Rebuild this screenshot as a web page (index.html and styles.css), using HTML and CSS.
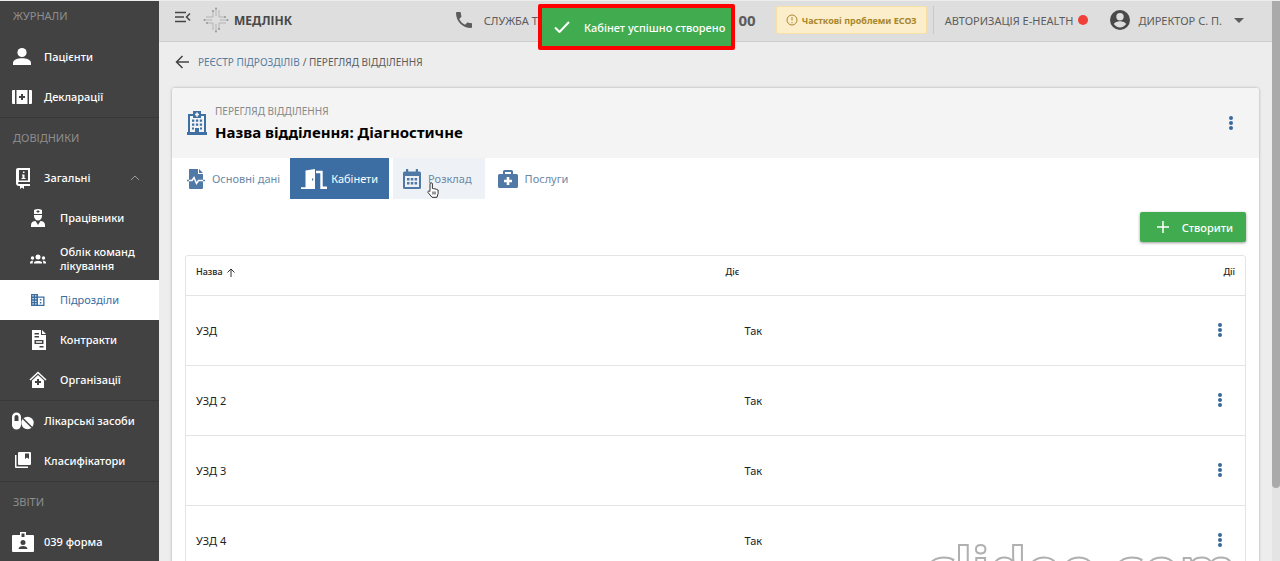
FILE: index.html
```
<!DOCTYPE html>
<html lang="uk">
<head>
    <meta charset="UTF-8">
    <meta name="viewport" content="width=device-width, initial-scale=1.0">
    <title>Медлінк - Перегляд відділення</title>
    <link rel="stylesheet" href="styles.css">
</head>
<body>
    <aside class="sidebar">
        <h2 class="nav-title first">ЖУРНАЛИ</h2>
        <nav class="nav-group">
            <a href="#" class="nav-item">
                <svg class="icon" viewBox="0 0 22 22"><circle cx="10" cy="6.500" r="4.600"/><path d="M1 19v-2c0-3.500 5-4.800 9-4.800s9 1.300 9 4.800v2z"/></svg>
                Пацієнти
            </a>
            <a href="#" class="nav-item">
                <svg class="icon" viewBox="0 0 22 22"><path d="M0 5a1 1 0 0 1 1-1h2v14H1a1 1 0 0 1-1-1zM4.500 4h11v14h-11zM17 4h2a1 1 0 0 1 1 1v12a1 1 0 0 1-1 1h-2z"/><path d="M10 8v6M7 11h6" stroke="#424242" stroke-width="2"/></svg>
                Декларації
            </a>
        </nav>

        <h2 class="nav-title">ДОВІДНИКИ</h2>
        <nav class="nav-group">
            <a href="#" class="nav-item">
                <svg class="icon" viewBox="0 0 22 22"><path fill-rule="evenodd" d="M6 1h12v14H7a1 1 0 0 0 0 2h11v2h-6v3l-2-1.500L8 22v-3H7a3 3 0 0 1-3-3V3a2 2 0 0 1 2-2zm1 2v10.500h9V3z"/><path d="M11 4.500h1.500v1.500H11zM10 7.500h2.500v3.500h1v1h-4v-1h1V8.500H10z"/></svg>
                Загальні
                <svg class="chevron" viewBox="0 0 10 6"><path d="M1 5l4-4 4 4"/></svg>
            </a>
            <a href="#" class="nav-item sub">
                <svg class="icon" viewBox="0 0 20 20"><path d="M6 2q4-2 8 0v4H6z"/><path d="M6 7h8v1c0 2.500-2 4.500-4 4.500S6 10.500 6 8z"/><path d="M3 19v-2c0-2.500 2-4 4.500-4L10 17l2.500-4c2.500 0 4.500 1.500 4.500 4v2z"/><path d="M10 2v3M8.500 3.500h3" stroke="#424242"/></svg>
                Працівники
            </a>
            <a href="#" class="nav-item sub two-lines">
                <svg class="icon" viewBox="0 0 20 20"><circle cx="10" cy="8" r="2.500"/><circle cx="4.500" cy="9" r="1.700"/><circle cx="15.500" cy="9" r="1.700"/><path d="M6 14.500v-1c0-2 8-2 8 0v1zM2 14.500v-1.200c0-1 1.500-1.600 3.200-1.600-.3.500-.5 1-.5 2.800zM18 14.500v-1.200c0-1-1.500-1.600-3.200-1.600.3.500.5 1 .5 2.800z"/></svg>
                Облік команд лікування
            </a>
            <a href="#" class="nav-item sub active">
                <svg class="icon" viewBox="0 0 20 20"><path fill-rule="evenodd" d="M3 4h7v2.500h6.500V16H3zm1.400 1.300v1.200h1.200V5.300zm2.800 0v1.200h1.200V5.300zM4.400 8v1.200h1.200V8zm2.800 0v1.200h1.200V8zm-2.800 2.700v1.200h1.200v-1.200zm2.800 0v1.200h1.200v-1.200zm-2.800 2.600v1.200h1.200v-1.200zm2.800 0v1.200h1.200v-1.200zM10 7.800v7h5.200v-7zM11.800 9h1.600v1.500h-1.600zm0 3h1.600v1.500h-1.600z"/></svg>
                Підрозділи
            </a>
            <a href="#" class="nav-item sub">
                <svg class="icon" viewBox="0 0 20 20"><path fill-rule="evenodd" d="M4 0h9v5h5v15H4zm2.500 3v1.500H11V3zm0 3v1.500H11V6zm0 4v4h9v-4zm1.500 1.300h6v1.400H8zM11.500 16v1.500h4V16zM14 0l4 4h-4z"/></svg>
                Контракти
            </a>
            <a href="#" class="nav-item sub">
                <svg class="icon" viewBox="0 0 20 20"><path d="M2 10l8-7.500 8 7.500" fill="none" stroke="#fff" stroke-width="1.500"/><path d="M4 10.500L10 5l6 5.500V18H4z"/><path d="M10 9v6M7 12h6" stroke="#424242" stroke-width="2"/></svg>
                Організації
            </a>
        </nav>
        <nav class="nav-group">
            <a href="#" class="nav-item">
                <svg class="icon" viewBox="0 0 22 22"><path fill-rule="evenodd" d="M0 7a4.500 4.500 0 0 1 9 0v8a4.500 4.500 0 0 1-9 0zm2.500 0v4h4V7a2 2 0 0 0-4 0z"/><circle cx="15.500" cy="13" r="6.200"/><path d="M11 8.500l9 9" stroke="#424242" stroke-width="1.500"/></svg>
                Лікарські засоби
            </a>
            <a href="#" class="nav-item">
                <svg class="icon" viewBox="0 0 22 22"><path fill-rule="evenodd" d="M7 2h11a1 1 0 0 1 1 1v11a1 1 0 0 1-1 1H7a1 1 0 0 1-1-1V3a1 1 0 0 1 1-1zm6 1.500V9l2-1.500L17 9V3.500z"/><path d="M3 5h1.500v11.500H16V18H4a1 1 0 0 1-1-1z"/></svg>
                Класифікатори
            </a>
        </nav>

        <h2 class="nav-title">ЗВІТИ</h2>
        <nav class="nav-group">
            <a href="#" class="nav-item">
                <svg class="icon" viewBox="0 0 22 22"><path fill-rule="evenodd" d="M1 4h7V1h6v3h7a1 1 0 0 1 1 1v15a1 1 0 0 1-1 1H1a1 1 0 0 1-1-1V5a1 1 0 0 1 1-1zm8.500-1.500V6h3V2.500z"/><circle cx="11" cy="11.500" r="2.500" fill="#424242"/><path d="M6.500 18c0-4 9-4 9 0z" fill="#424242"/></svg>
                039 форма
            </a>
        </nav>
    </aside>

    <div class="page">
        <header class="topbar">
            <button class="icon-btn menu-btn" aria-label="Меню">
                <svg viewBox="0 0 16 12"><path d="M0 1.500h11M0 6h9M0 10.500h11M15 2.500L11.500 6l3.500 3.500"/></svg>
            </button>
            <a href="#" class="logo">
                <svg viewBox="0 0 26 26"><path d="M10 3v7H3M16 3v7h7M10 23v-7H3M16 23v-7h7M13 1v8M13 17v8M1 13h8M17 13h8" /><g class="dots"><circle cx="13" cy="1.500" r="1"/><circle cx="13" cy="24.500" r="1"/><circle cx="1.500" cy="13" r="1"/><circle cx="24.500" cy="13" r="1"/><circle cx="10" cy="4" r="1"/><circle cx="16" cy="22" r="1"/><circle cx="4" cy="16" r="1"/><circle cx="22" cy="10" r="1"/></g></svg>
                МЕДЛІНК
            </a>
            <div class="support">
                <svg viewBox="3 3 18 18"><path d="M6.620 10.790c1.440 2.830 3.760 5.140 6.590 6.590l2.200-2.200c.27-.27.67-.36 1.020-.24 1.120.37 2.330.57 3.570.57.550 0 1 .45 1 1V20c0 .55-.45 1-1 1-9.390 0-17-7.610-17-17 0-.55.45-1 1-1h3.500c.55 0 1 .45 1 1 0 1.250.2 2.450.57 3.570.11.35.03.74-.25 1.020z"/></svg>
                <span>СЛУЖБА ТЕ</span>
                <b>00</b>
            </div>
            <button class="warning">
                <svg viewBox="0 0 12 12"><circle cx="6" cy="6" r="5"/><path d="M6 3v3.500M6 8v1.200"/></svg>
                Часткові проблеми ЕСОЗ
            </button>
            <div class="auth">АВТОРИЗАЦІЯ E-HEALTH <i class="status"></i></div>
            <button class="user">
                <svg class="avatar" viewBox="2 2 20 20"><path fill-rule="evenodd" d="M12 2a10 10 0 1 0 0 20 10 10 0 0 0 0-20zm0 3a3.700 3.700 0 1 1 0 7.400 3.700 3.700 0 0 1 0-7.400zm0 14.500a7.500 7.500 0 0 1-6-3.200c0-2 4-3 6-3s6 1 6 3a7.500 7.500 0 0 1-6 3.200z"/></svg>
                ДИРЕКТОР С. П.
                <svg class="caret" viewBox="0 0 10 5"><path d="M0 0h10L5 5z"/></svg>
            </button>
        </header>

        <div class="breadcrumbs">
            <button class="icon-btn back-btn" aria-label="Назад">
                <svg viewBox="0 0 14 14"><path d="M14 7H1.500M7.500 1L1.500 7l6 6"/></svg>
            </button>
            <a href="#">РЕЄСТР ПІДРОЗДІЛІВ</a>
            <span>/ ПЕРЕГЛЯД ВІДДІЛЕННЯ</span>
        </div>

        <main class="card">
            <div class="card-header">
                <svg class="building" viewBox="0 0 20 24"><path fill-rule="evenodd" d="M6 3V0h8v3h5v18h1v3H0v-3h1V3zM3 5v16h5v-4h4v4h5V5h-3v2H6V5zM9.200 1.500v1.300H8v1.500h1.200v1.400h1.600V4.300H12V2.800h-1.200V1.500z"/><path d="M5 8.500h2.300v2.300H5zM8.900 8.500h2.300v2.300H8.900zM12.800 8.500h2.300v2.300h-2.300zM5 12.500h2.300v2.300H5zM8.900 12.500h2.300v2.300H8.900zM12.800 12.500h2.300v2.300h-2.300zM5 16.500h2v2H5zM13 16.500h2v2h-2z"/></svg>
                <div class="card-title">
                    <small>ПЕРЕГЛЯД ВІДДІЛЕННЯ</small>
                    <h1>Назва відділення: Діагностичне</h1>
                </div>
                <button class="more" aria-label="Дії відділення"><svg viewBox="0 0 4 14"><circle cx="2" cy="2" r="2"/><circle cx="2" cy="7" r="2"/><circle cx="2" cy="12" r="2"/></svg></button>
            </div>

            <div class="tabs">
                <button class="tab tab-main">
                    <svg viewBox="0 0 18 20"><path d="M2 0h9v5h5v14a1 1 0 0 1-1 1H3a1 1 0 0 1-1-1zM12 0l4 4h-4z"/><path d="M0 11.500h5l2-3 2.500 6 2-3H18" fill="none" stroke="#fff" stroke-width="1.500"/><path d="M0 11.500h2M16 11.500h2" stroke="#5d84ae" stroke-width="1.500"/></svg>
                    Основні дані
                </button>
                <button class="tab active">
                    <svg class="door" viewBox="0 0 26 20"><path fill-rule="evenodd" d="M4.500 1.500L14 0v20H0v-1.800h4.500zM11 9.500v2h1.200v-2z"/><path d="M15 3h5.500v15.800h5.500" fill="none" stroke="#fff" stroke-width="2.400"/></svg>
                    Кабінети
                </button>
                <button class="tab hover">
                    <svg viewBox="0 0 18 20"><path fill-rule="evenodd" d="M3 0h2.200v2.500h7.600V0H15v2.500h1.500A1.500 1.500 0 0 1 18 4v14.500a1.500 1.500 0 0 1-1.500 1.500h-15A1.500 1.500 0 0 1 0 18.500V4a1.500 1.500 0 0 1 1.500-1.500H3zM2 7v11h14V7z"/><path d="M4 9h2.500v2.500H4zM7.800 9h2.500v2.500H7.800zM11.600 9h2.500v2.500h-2.500zM4 13h2.500v2.500H4zM7.800 13h2.500v2.500H7.800zM11.600 13h2.500v2.500h-2.500z"/></svg>
                    Розклад
                    <svg class="pointer" viewBox="0 0 12 16"><path d="M3 8.500V2a1.200 1.200 0 0 1 2.400 0v4.500l1.100.1 1.500.3 1.500.4 1.600.7v3.500L10 15.300H5L1 10.500C.3 9.300 1.800 8.500 3 9.500zM6 9.500v3M8 9.500v3"/></svg>
                </button>
                <button class="tab">
                    <svg class="medkit" viewBox="0 0 20 20"><path fill-rule="evenodd" d="M5 5V2.500A1.500 1.500 0 0 1 6.500 1h7A1.500 1.500 0 0 1 15 2.500V5h3.500A1.500 1.500 0 0 1 20 6.500v11a1.500 1.500 0 0 1-1.500 1.500h-17A1.500 1.500 0 0 1 0 17.500v-11A1.500 1.500 0 0 1 1.500 5zm2-2v2h6V3zm1.700 5v2.700H6v2.600h2.700V16h2.600v-2.700H14v-2.600h-2.700V8z"/></svg>
                    Послуги
                </button>
            </div>

            <div class="card-body">
                <button class="create">
                    <svg viewBox="0 0 12 12"><path d="M6 0v12M0 6h12"/></svg>
                    Створити
                </button>

                <div class="table-box">
                    <table>
                        <thead>
                            <tr>
                                <th class="col-name">Назва <svg viewBox="0 0 8 9"><path d="M4 9V1M0.500 4.500L4 1l3.500 3.500"/></svg></th>
                                <th>Діє</th>
                                <th class="col-actions">Дії</th>
                            </tr>
                        </thead>
                        <tbody>
                            <tr>
                                <td>УЗД</td>
                                <td class="state">Так</td>
                                <td class="col-actions"><button class="more" aria-label="Дії УЗД"><svg viewBox="0 0 4 14"><circle cx="2" cy="2" r="2"/><circle cx="2" cy="7" r="2"/><circle cx="2" cy="12" r="2"/></svg></button></td>
                            </tr>
                            <tr>
                                <td>УЗД 2</td>
                                <td class="state">Так</td>
                                <td class="col-actions"><button class="more" aria-label="Дії УЗД 2"><svg viewBox="0 0 4 14"><circle cx="2" cy="2" r="2"/><circle cx="2" cy="7" r="2"/><circle cx="2" cy="12" r="2"/></svg></button></td>
                            </tr>
                            <tr>
                                <td>УЗД 3</td>
                                <td class="state">Так</td>
                                <td class="col-actions"><button class="more" aria-label="Дії УЗД 3"><svg viewBox="0 0 4 14"><circle cx="2" cy="2" r="2"/><circle cx="2" cy="7" r="2"/><circle cx="2" cy="12" r="2"/></svg></button></td>
                            </tr>
                            <tr>
                                <td>УЗД 4</td>
                                <td class="state">Так</td>
                                <td class="col-actions"><button class="more" aria-label="Дії УЗД 4"><svg viewBox="0 0 4 14"><circle cx="2" cy="2" r="2"/><circle cx="2" cy="7" r="2"/><circle cx="2" cy="12" r="2"/></svg></button></td>
                            </tr>
                        </tbody>
                    </table>
                </div>
            </div>
        </main>
    </div>

    <div class="scrollbar"><div class="thumb"></div></div>

    <div class="toast" role="status">
        <svg viewBox="0 0 16 12"><path d="M1 6.500L5.500 11 15 1"/></svg>
        Кабінет успішно створено
    </div>
    <div class="watermark">clideo.com</div>
</body>
</html>
```
FILE: styles.css
```
* {
    box-sizing: border-box;
}

body {
    margin: 0;
    padding-top: 1px;
    height: 100vh;
    display: flex;
    overflow: hidden;
    position: relative;
    font-family: "Noto Sans", "Open Sans", sans-serif;
    font-size: 11px;
    color: #222;
    background-color: #ededed;
}

button {
    font: inherit;
    color: inherit;
    background: none;
    border: none;
    padding: 0;
    cursor: pointer;
}

a {
    color: inherit;
    text-decoration: none;
}

svg {
    flex-shrink: 0;
    fill: currentColor;
}

/* Бічне меню */
.sidebar {
    width: 159px;
    flex-shrink: 0;
    overflow: hidden;
    background-color: #424242;
    color: #fff;
}

.nav-title {
    margin: 0;
    height: 40px;
    padding-left: 13px;
    font-size: 11px;
    font-weight: 400;
    line-height: 40px;
    color: #8e8e8e;
}

.nav-title.first {
    height: 36px;
    line-height: 30px;
}

.nav-group {
    border-bottom: 1px solid #383838;
}

.nav-item {
    display: flex;
    align-items: center;
    gap: 10px;
    height: 40px;
    padding-left: 12px;
    font-weight: 500;
    line-height: 14px;
}

.nav-item .icon {
    width: 22px;
    height: 22px;
}

.nav-item.sub {
    gap: 12px;
    padding-left: 28px;
    padding-right: 20px;
}

.nav-item.two-lines {
    height: 42px;
}

.nav-item.sub .icon {
    width: 20px;
    height: 20px;
}

.nav-item.active {
    background-color: #fff;
    font-weight: 400;
    color: #3b6da1;
}

.chevron {
    width: 10px;
    height: 6px;
    margin-left: auto;
    margin-right: 19px;
    fill: none;
    stroke: #999;
}

/* Верхня панель */
.page {
    flex: 1;
    min-width: 0;
}

.topbar {
    display: flex;
    align-items: center;
    height: 41px;
    padding: 0 28px 2px 16px;
    background-color: #dedede;
    border-bottom: 1px solid #cfcfcf;
    color: #5c5c5c;
    white-space: nowrap;
}

.icon-btn {
    display: flex;
    color: #444;
}

.icon-btn svg {
    fill: none;
    stroke: currentColor;
    stroke-width: 1.5;
}

.menu-btn {
    padding-bottom: 6px;
}

.menu-btn svg {
    width: 16px;
    height: 12px;
}

.logo {
    display: flex;
    align-items: center;
    gap: 5px;
    margin-left: 12px;
    font-size: 12px;
    font-weight: 700;
    color: #484848;
}

.logo svg {
    width: 26px;
    height: 26px;
    fill: none;
    stroke: #b4b4b4;
}

.logo .dots {
    fill: #999;
    stroke: none;
}

.support {
    display: flex;
    align-items: center;
    width: 300px;
    margin-left: auto;
}

.support svg {
    width: 16px;
    height: 16px;
    margin-right: 12px;
}

.support b {
    margin-left: auto;
    font-size: 15px;
}

.warning {
    display: flex;
    align-items: center;
    gap: 4px;
    height: 28px;
    margin-left: 20px;
    padding: 0 9px;
    font-size: 9px;
    font-weight: 700;
    color: #a8872e;
    background-color: #fdeecb;
    border: 1px solid #f8dfa3;
    border-radius: 2px;
}

.warning svg {
    width: 12px;
    height: 12px;
    fill: none;
    stroke: currentColor;
}

.auth {
    display: flex;
    align-items: center;
    height: 28px;
    margin-left: 6px;
    padding-left: 11px;
    border-left: 1px solid #c8c8c8;
}

.status {
    width: 10px;
    height: 10px;
    margin-left: 5px;
    border-radius: 50%;
    background-color: #f0403a;
}

.user {
    display: flex;
    align-items: center;
    gap: 8px;
    margin-left: 22px;
}

.avatar {
    width: 20px;
    height: 20px;
    color: #4a4a4a;
}

.caret {
    width: 10px;
    height: 5px;
    margin-left: 4px;
}

.breadcrumbs {
    display: flex;
    align-items: center;
    gap: 3px;
    height: 40px;
    padding-left: 16px;
    font-size: 10px;
    color: #5c5c5c;
}

.back-btn {
    margin-right: 6px;
}

.back-btn svg {
    width: 14px;
    height: 14px;
}

.breadcrumbs a {
    color: #557ca3;
}

/* Картка відділення */
.card {
    margin: 6px 13px 0;
    min-height: 520px;
    background-color: #fff;
    border-radius: 3px;
    box-shadow: 0 0 3px rgba(0, 0, 0, 0.3);
}

.card-header {
    display: flex;
    align-items: center;
    height: 70px;
    padding: 0 13px 0 15px;
    background-color: #f4f4f4;
    border-radius: 3px 3px 0 0;
}

.building {
    width: 20px;
    height: 24px;
    color: #3f70a3;
}

.card-title {
    margin-left: 8px;
}

.card-title small {
    display: block;
    font-size: 10px;
    line-height: 18px;
    color: #888;
}

.card-title h1 {
    margin: 0;
    font-size: 15px;
    line-height: 24px;
    color: #000;
}

.more {
    display: inline-flex;
    align-items: center;
    justify-content: center;
    width: 30px;
    height: 30px;
    color: #37699d;
}

.card-header .more {
    margin-left: auto;
}

.more svg {
    width: 4px;
    height: 14px;
}

.tabs {
    display: flex;
    height: 41px;
}

.tab {
    display: flex;
    align-items: center;
    gap: 7px;
    padding: 0 13px;
    color: #6a88a8;
}

.tab svg {
    width: 18px;
    height: 20px;
    color: #5079a6;
}

.tab-main {
    padding-left: 15px;
    padding-right: 10px;
}

.tab.active {
    gap: 4px;
    padding: 0 11px;
    background-color: #3c6ea3;
    color: #fff;
}

.tab.hover {
    position: relative;
    margin-left: 4px;
    padding-left: 10px;
    background-color: #eef2f6;
}

.tab .door {
    width: 26px;
    color: #fff;
}

.tab .medkit {
    width: 20px;
}

/* Курсор над вкладкою */
.tab .pointer {
    position: absolute;
    left: 34px;
    top: 24px;
    width: 12px;
    height: 16px;
    fill: #fff;
    stroke: #333;
}

.card-body {
    display: flex;
    flex-direction: column;
    padding: 13px 13px 0;
}

.create {
    display: flex;
    align-items: center;
    gap: 13px;
    align-self: flex-end;
    height: 30px;
    padding: 0 13px 0 17px;
    font-weight: 500;
    color: #fff;
    background-color: #41ab50;
    border-radius: 2px;
    box-shadow: 0 1px 3px rgba(0, 0, 0, 0.4);
}

.create svg {
    width: 12px;
    height: 12px;
    stroke: #fff;
    stroke-width: 1.5;
}

.table-box {
    margin-top: 13px;
    border: 1px solid #e4e4e4;
    border-radius: 3px;
}

table {
    width: 100%;
    border-collapse: collapse;
    table-layout: fixed;
}

th,
td {
    padding: 0 10px;
    text-align: left;
}

th {
    height: 39px;
    padding-bottom: 8px;
    font-size: 9px;
    font-weight: 500;
}

th svg {
    width: 8px;
    height: 9px;
    margin-left: 2px;
    vertical-align: -2px;
    fill: none;
    stroke: #333;
}

td {
    height: 70px;
    border-top: 1px solid #e4e4e4;
}

.col-name {
    width: 50%;
}

td.state {
    padding-left: 29px;
}

.col-actions {
    text-align: right;
}

/* Смуга прокрутки */
.scrollbar {
    width: 8px;
    flex-shrink: 0;
    background-color: #e4e4e4;
}

.thumb {
    height: 87%;
    background-color: #aaa;
    border-radius: 0 0 4px 4px;
}

/* Повідомлення */
.toast {
    position: absolute;
    top: 4px;
    left: 538px;
    display: flex;
    align-items: center;
    gap: 14px;
    height: 46px;
    padding: 0 6px 0 12px;
    font-weight: 500;
    color: #fff;
    background-color: #41ab50;
    border: 4px solid #ff0000;
    border-radius: 2px;
}

.toast svg {
    width: 16px;
    height: 12px;
    fill: none;
    stroke: #fff;
    stroke-width: 2;
}

.watermark {
    position: absolute;
    right: 44px;
    bottom: -46px;
    font-size: 58px;
    font-weight: 700;
    line-height: 80px;
    color: #fff;
    -webkit-text-stroke: 2px #b0b0b0;
}
```
